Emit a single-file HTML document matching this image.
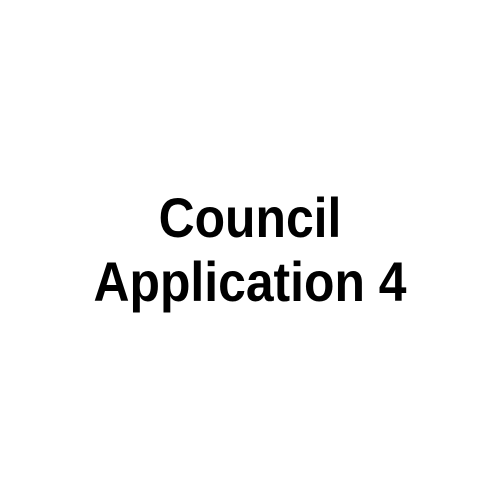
<!DOCTYPE html>
<html>
<head>
<style>
html,body{margin:0;padding:0;background:#fff;width:500px;height:500px;overflow:hidden;}
.t{position:absolute;left:0;width:500px;text-align:center;font-family:"Liberation Sans",sans-serif;font-weight:bold;font-size:56px;color:#000;line-height:1;transform:scaleX(0.89);transform-origin:250px 0;}
</style>
</head>
<body>
<div class="t" style="top:190px;">Council</div>
<div class="t" style="top:254px;">Application 4</div>
</body>
</html>
